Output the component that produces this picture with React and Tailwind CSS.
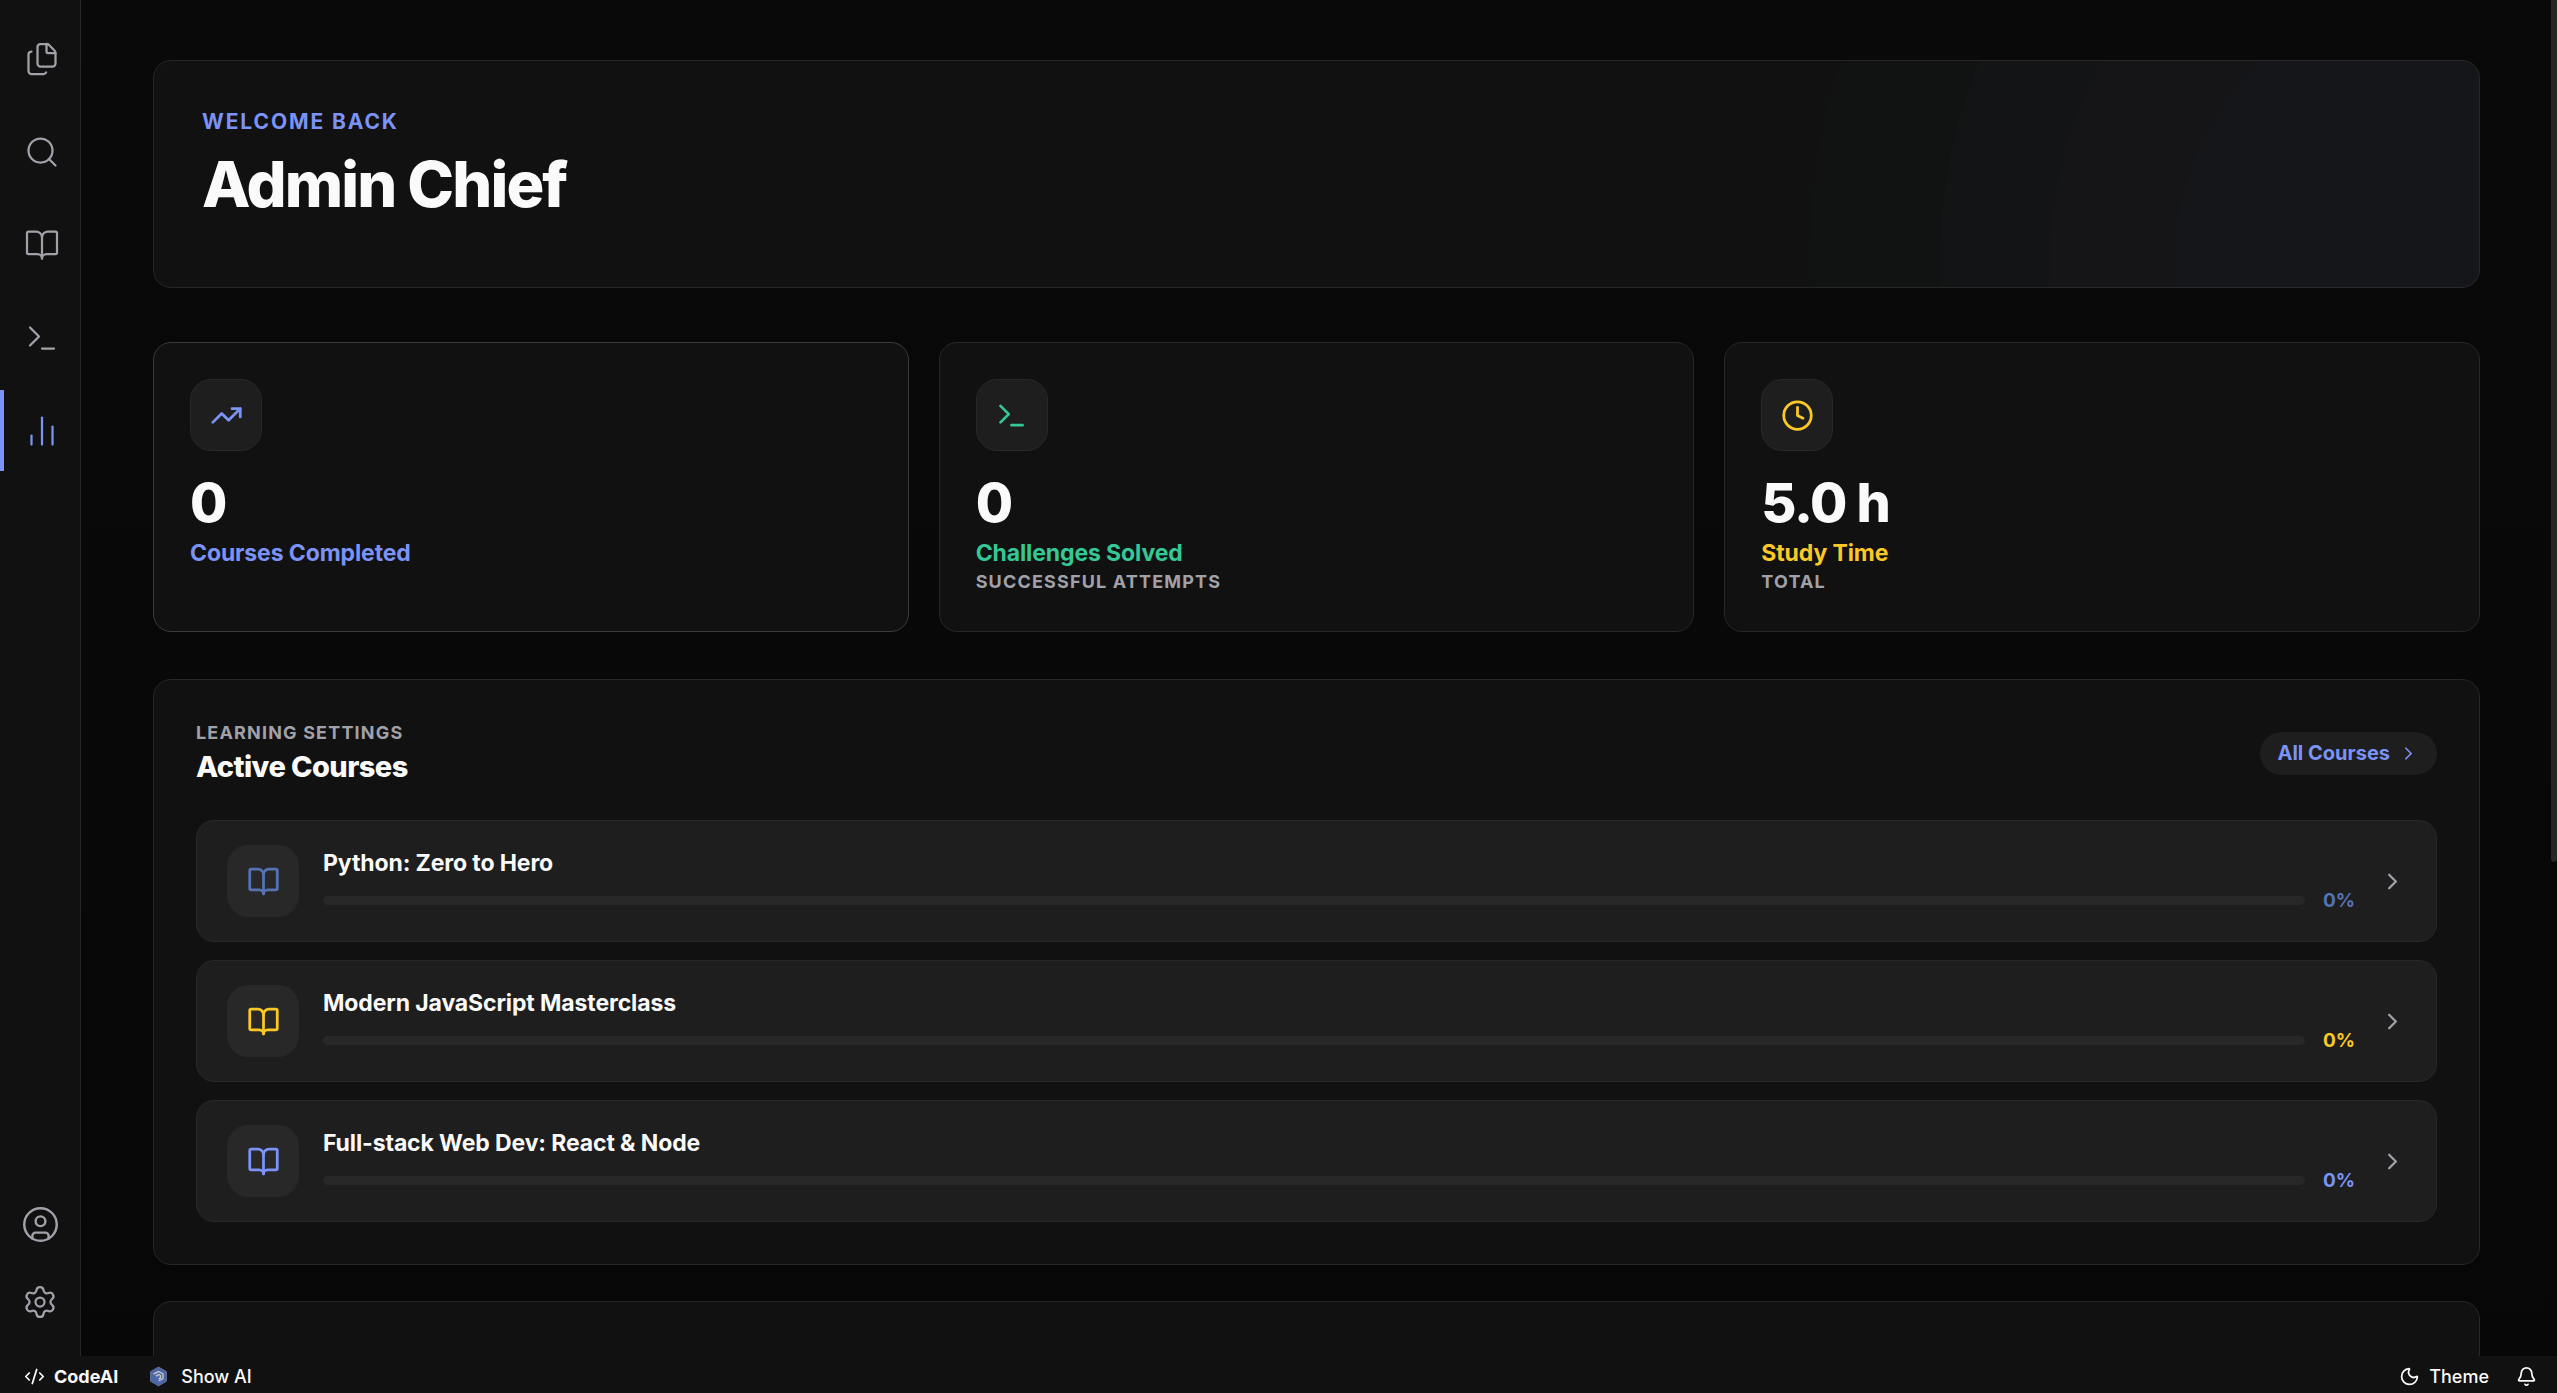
import React from 'react';
import {
    Files, Search, BookOpen, Terminal, ChartNoAxesColumn, CircleUser, Settings,
    TrendingUp, Clock, ChevronRight, CodeXml, Moon, Bell
} from 'lucide-react';

const NAV_ITEMS = [
    { label: 'Files', icon: Files },
    { label: 'Search', icon: Search },
    { label: 'Courses', icon: BookOpen },
    { label: 'Terminal', icon: Terminal },
    { label: 'Dashboard', icon: ChartNoAxesColumn, active: true }
];

const STATS = [
    { value: '0', label: 'Courses Completed', sub: '', icon: TrendingUp, color: 'text-[#7b93f7]', border: 'border-[#3a3b41]' },
    { value: '0', label: 'Challenges Solved', sub: 'Successful attempts', icon: Terminal, color: 'text-[#34c896]', border: 'border-[#272727]' },
    { value: '5.0 h', label: 'Study Time', sub: 'Total', icon: Clock, color: 'text-[#fbc926]', border: 'border-[#272727]' }
];

const COURSES = [
    { title: 'Python: Zero to Hero', progress: 0, color: 'text-[#5573b3]', bar: 'bg-[#5573b3]' },
    { title: 'Modern JavaScript Masterclass', progress: 0, color: 'text-[#fbc926]', bar: 'bg-[#fbc926]' },
    { title: 'Full-stack Web Dev: React & Node', progress: 0, color: 'text-[#7b93f7]', bar: 'bg-[#7b93f7]' }
];

const Sidebar = () => (
    <aside className="w-[81px] shrink-0 flex flex-col justify-between bg-[#111111] border-r border-[#272727] text-[#a1a1aa]">
        <nav className="flex flex-col gap-3 pt-[18px]">
            {NAV_ITEMS.map(({ label, icon: Icon, active }) => (
                <button
                    key={label}
                    type="button"
                    aria-label={label}
                    className={`h-[81px] w-full flex items-center justify-center border-l-4 ${active ? 'border-[#7b93f7] text-[#7b93f7]' : 'border-transparent'}`}
                >
                    <Icon size={36} strokeWidth={1.5} />
                </button>
            ))}
        </nav>
        <div className="flex flex-col items-center gap-10 pb-9">
            <button type="button" aria-label="Account">
                <CircleUser size={39} strokeWidth={1.5} />
            </button>
            <button type="button" aria-label="Settings">
                <Settings size={36} strokeWidth={1.5} />
            </button>
        </div>
    </aside>
);

const StatCard = ({ value, label, sub, icon: Icon, color, border }) => (
    <div className={`bg-[#111111] border ${border} rounded-[18px] p-9`}>
        <div className={`w-[72px] h-[72px] rounded-[21px] bg-[#1e1e1e] border border-[#282828] flex items-center justify-center ${color}`}>
            <Icon size={33} strokeWidth={2} />
        </div>
        <div className="mt-6 text-[54px] leading-[56px] font-extrabold tracking-tight text-[#fafafa]">{value}</div>
        <div className={`mt-1.5 text-[23px] leading-[32px] font-bold tracking-[-0.005em] ${color}`}>{label}</div>
        {sub && <div className="text-lg leading-[26px] font-bold tracking-[0.065em] uppercase text-[#a1a1aa]">{sub}</div>}
    </div>
);

const CourseRow = ({ title, progress, color, bar }) => (
    <a href="#" className="flex items-center gap-6 bg-[#1e1e1e] border border-[#282828] rounded-[18px] px-[30px] py-6">
        <div className={`w-[72px] h-[72px] shrink-0 rounded-[21px] bg-[#282828] flex items-center justify-center ${color}`}>
            <BookOpen size={33} strokeWidth={2} />
        </div>
        <div className="flex-1 min-w-0">
            <div className="text-[23px] leading-[30px] font-bold tracking-[-0.005em] text-[#fafafa]">{title}</div>
            <div className="mt-[9px] flex items-center gap-[18px]">
                <div className="flex-1 h-[9px] rounded-full bg-[#282828] overflow-hidden">
                    <div className={`h-full rounded-full ${bar}`} style={{ width: `${progress}%` }} />
                </div>
                <span className={`text-[19px] leading-[27px] font-bold ${color}`}>{progress}%</span>
            </div>
        </div>
        <ChevronRight size={27} className="shrink-0 text-[#a1a1aa]" />
    </a>
);

const StatusBar = () => (
    <footer className="h-[37px] shrink-0 flex items-center justify-between pl-6 pr-5 pt-1 bg-[#111111] text-[#fafafa] text-lg">
        <div className="flex items-center gap-[30px]">
            <a href="#" className="flex items-center gap-[9px] font-bold">
                <CodeXml size={21} />
                CodeAI
            </a>
            <button type="button" className="flex items-center gap-3 font-medium">
                <svg width="21" height="21" viewBox="0 0 21 21" fill="none">
                    <path d="M10.5 1l8 4.600v9.600l-8 4.800-8-4.800V5.600z" fill="#4c66a8" stroke="#5f6b8c" strokeWidth="1" />
                    <path d="M5.500 8l5-2.500 4.500 2.500v4.500l-4.500 2.500M8 10l3-1.500 1.500 1v2.500l-2 1" stroke="#c0c4cc" strokeWidth="1.400" />
                </svg>
                Show AI
            </button>
        </div>
        <div className="flex items-center gap-[27px]">
            <button type="button" className="flex items-center gap-[9px] font-medium">
                <Moon size={21} />
                Theme
            </button>
            <button type="button" aria-label="Notifications">
                <Bell size={21} />
            </button>
        </div>
    </footer>
);

const App = () => (
    <div className="h-screen flex flex-col overflow-hidden bg-[#090909] font-['Inter',sans-serif]">
        <div className="flex-1 min-h-0 flex">
            <Sidebar />
            <main className="flex-1 min-w-0 overflow-hidden pl-[72px] pr-[71px] pt-[60px] bg-linear-to-b from-[#090909] to-[#070707]">
                <section className="bg-[#111111] bg-[radial-gradient(circle_at_99%_88%,#15161a_280px,#151416_281px,#151416_405px,#121415_406px,#121415_515px,#111312_516px,#111312_645px,#111111_646px)] border border-[#272727] rounded-[18px] px-12 pt-[45px] pb-[68px]">
                    <p className="text-[21px] leading-[32px] font-bold tracking-[0.09em] uppercase text-[#7b93f7]">Welcome back</p>
                    <h1 className="mt-3 text-[63px] leading-[69px] font-extrabold tracking-[-0.03em] text-[#fafafa]">Admin Chief</h1>
                </section>

                <section className="mt-[54px] grid grid-cols-3 gap-[30px]">
                    {STATS.map((stat) => <StatCard key={stat.label} {...stat} />)}
                </section>

                <section className="mt-[47px] bg-[#111111] border border-[#272727] rounded-[18px] p-[42px]">
                    <div className="flex items-center justify-between mb-9">
                        <div>
                            <p className="text-lg leading-[21px] font-bold tracking-[0.065em] uppercase text-[#a1a1aa]">Learning settings</p>
                            <h2 className="mt-1.5 text-[29px] leading-[35px] font-extrabold tracking-[-0.02em] text-[#fafafa]">Active Courses</h2>
                        </div>
                        <a href="#" className="flex items-center gap-2 h-[43px] px-[18px] rounded-full bg-[#1e1e1e] text-[20px] font-bold text-[#7b93f7]">
                            All Courses
                            <ChevronRight size={21} />
                        </a>
                    </div>
                    <div className="flex flex-col gap-[18px]">
                        {COURSES.map((course) => <CourseRow key={course.title} {...course} />)}
                    </div>
                </section>

                <section className="mt-9 h-[300px] bg-[#111111] border border-[#272727] rounded-[18px]" />
            </main>
            <div className="w-1.5 shrink-0 bg-[#070707]">
                <div className="h-[862px] rounded-b-sm bg-[#262626]" />
            </div>
        </div>
        <StatusBar />
    </div>
);

export default App;
